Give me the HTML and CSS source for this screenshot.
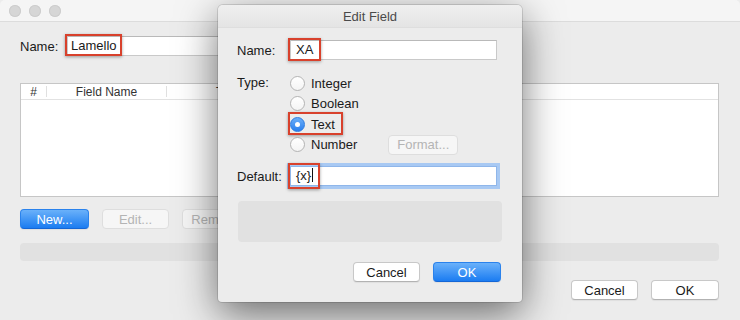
FILE: index.html
```html
<!DOCTYPE html>
<html lang="en">
<head>
    <meta charset="UTF-8">
    <meta name="viewport" content="width=device-width, initial-scale=1.0">
    <title>Edit Field</title>
    <link rel="stylesheet" href="styles.css">
</head>
<body>
    <div class="window">
        <div class="titlebar">
            <span class="dot"></span>
            <span class="dot"></span>
            <span class="dot"></span>
        </div>

        <div class="content">
            <div class="name-row">
                <span class="label">Name:</span>
                <div class="field-wrap">
                    <div class="field main-field">Lamello</div>
                    <span class="mark mark-lamello"></span>
                </div>
            </div>

            <!-- field table -->
            <div class="table">
                <div class="table-head">
                    <span class="col col-num">#</span>
                    <span class="col col-name">Field Name</span>
                    <span class="col col-type">Type</span>
                </div>
            </div>

            <div class="button-row">
                <button class="btn btn-blue">New...</button>
                <button class="btn btn-off">Edit...</button>
                <button class="btn btn-off">Remove</button>
            </div>

            <div class="status-bar"></div>

            <div class="footer">
                <button class="btn">Cancel</button>
                <button class="btn">OK</button>
            </div>
        </div>
    </div>

    <!-- sheet dialog over the window -->
    <div class="dialog">
        <div class="dialog-title">Edit Field</div>
        <div class="dialog-body">
            <div class="form-row">
                <span class="form-label">Name:</span>
                <div class="field-wrap">
                    <div class="field">XA</div>
                    <span class="mark mark-name"></span>
                </div>
            </div>

            <div class="form-row type-row">
                <span class="form-label">Type:</span>
                <div class="radios">
                    <div class="radio"><span class="circle"></span>Integer</div>
                    <div class="radio"><span class="circle"></span>Boolean</div>
                    <div class="radio"><span class="circle checked"></span>Text<span class="mark mark-text"></span></div>
                    <div class="radio radio-number">
                        <span class="circle"></span>Number
                        <button class="btn btn-off btn-format">Format...</button>
                    </div>
                </div>
            </div>

            <div class="form-row default-row">
                <span class="form-label">Default:</span>
                <div class="field-wrap">
                    <div class="field focused">{x}<span class="caret"></span></div>
                    <span class="mark mark-default"></span>
                </div>
            </div>

            <div class="info-box"></div>

            <div class="dialog-buttons">
                <button class="btn">Cancel</button>
                <button class="btn btn-blue">OK</button>
            </div>
        </div>
    </div>
</body>
</html>
```

FILE: styles.css
```css
body {
    font-family: 'Liberation Sans', Arial, sans-serif;
    font-size: 13px;
    color: #1a1a1a;
    margin: 0;
    padding: 0;
    width: 740px;
    height: 320px;
    overflow: hidden;
    background-color: #ececec;
    position: relative;
}

.window {
    height: 320px;
    background-color: #ececec;
}

.titlebar {
    height: 21px;
    background-color: #f5f5f5;
    border-bottom: 1px solid #dcdcdc;
    display: flex;
    align-items: center;
    gap: 8px;
    padding-left: 9px;
    border-radius: 5px 5px 0 0;
}

.dot {
    width: 12px;
    height: 12px;
    border-radius: 50%;
    background-color: #d6d6d6;
    box-shadow: inset 0 0 0 1px #cdcdcd;
}

.content {
    padding: 0 21px 0 20px;
}

.name-row {
    display: flex;
    align-items: center;
    margin-top: 14px;
}

.name-row .label {
    width: 47px;
}

.field-wrap {
    position: relative;
}

.field {
    box-sizing: border-box;
    height: 20px;
    width: 207px;
    line-height: 18px;
    padding-left: 5px;
    background-color: white;
    border: 1px solid #c9c9c9;
    border-top-color: #b9b9b9;
}

.main-field {
    width: 300px;
    padding-left: 3px;
}

.field.focused {
    box-shadow: 0 0 0 3px #a8c9f3;
    border-color: #8fb6ea;
}

.caret {
    display: inline-block;
    width: 1px;
    height: 14px;
    background-color: #111;
    vertical-align: -2px;
    margin-left: 1px;
}

/* red highlight boxes */
.mark {
    position: absolute;
    box-sizing: border-box;
    border: 2px solid #d8412c;
    box-shadow: 0 1px 3px rgba(0, 0, 0, 0.35);
    pointer-events: none;
}

.mark-lamello {
    left: -2px;
    top: -2px;
    width: 57px;
    height: 22px;
}

.mark-name {
    left: -2px;
    top: -2px;
    width: 33px;
    height: 23px;
}

.mark-text {
    left: -2px;
    top: -2px;
    width: 55px;
    height: 23px;
}

.mark-default {
    left: -2px;
    top: -3px;
    width: 32px;
    height: 26px;
}

.table {
    margin-top: 27px;
    height: 112px;
    background-color: white;
    border: 1px solid #c6c6c6;
}

.table-head {
    display: flex;
    height: 15px;
    border-bottom: 1px solid #e2e2e2;
    font-size: 12px;
    color: #333;
    line-height: 15px;
}

.col {
    text-align: center;
    border-right: 1px solid #e0e0e0;
    margin: 2px 0;
    line-height: 12px;
}

.col-num {
    width: 25px;
}

.col-name {
    width: 119px;
}

.col-type {
    width: 124px;
}

.button-row {
    display: flex;
    gap: 13px;
    margin-top: 12px;
}

.btn {
    box-sizing: border-box;
    height: 20px;
    width: 67px;
    padding: 0;
    font-family: 'Liberation Sans', Arial, sans-serif;
    font-size: 13px;
    color: #1a1a1a;
    background-color: white;
    border: 1px solid #c8c8c8;
    border-bottom-color: #b2b2b2;
    border-radius: 4px;
    box-shadow: 0 1px 1px rgba(0, 0, 0, 0.06);
}

.btn-blue {
    width: 69px;
    color: white;
    background: linear-gradient(#6ab1fa, #1b7cf1);
    border-color: #2a82ec;
    border-bottom-color: #1466d6;
}

.btn-off {
    color: #b4b4b4;
    background-color: #f6f6f6;
    border-color: #dedede;
    box-shadow: none;
}

.status-bar {
    margin-top: 14px;
    height: 18px;
    border-radius: 4px;
    background-color: #e1e1e1;
}

.footer {
    display: flex;
    justify-content: flex-end;
    gap: 13px;
    margin-top: 19px;
}

.footer .btn:last-child {
    width: 68px;
}

/* dialog */
.dialog {
    position: absolute;
    left: 218px;
    top: 5px;
    width: 304px;
    height: 297px;
    background-color: #ececec;
    border-radius: 5px 5px 4px 4px;
    box-shadow: 0 0 0 1px rgba(0, 0, 0, 0.12), 0 12px 40px rgba(0, 0, 0, 0.55);
}

.dialog-title {
    height: 23px;
    line-height: 23px;
    text-align: center;
    color: #4a4a4a;
    background: linear-gradient(#efefef, #e4e4e4);
    border-radius: 5px 5px 0 0;
    border-bottom: 1px solid #dedede;
    box-sizing: border-box;
}

.dialog-body {
    padding: 12px 20px 0 19px;
}

.form-row {
    display: flex;
    align-items: center;
}

.form-label {
    width: 53px;
}

.type-row {
    align-items: flex-start;
    margin-top: 13px;
}

.type-row .form-label {
    line-height: 20px;
}

.radios {
    display: flex;
    flex-direction: column;
}

.radio {
    position: relative;
    display: flex;
    align-items: center;
    height: 20.5px;
    gap: 6px;
}

.circle {
    box-sizing: border-box;
    width: 15px;
    height: 15px;
    border-radius: 50%;
    background: linear-gradient(#ffffff, #f4f4f4);
    border: 1px solid #b4b4b4;
}

.circle.checked {
    background: linear-gradient(#6aaef8, #2a7fee);
    border-color: #2c7be0;
    position: relative;
}

.circle.checked::after {
    content: "";
    position: absolute;
    left: 4px;
    top: 4px;
    width: 5px;
    height: 5px;
    border-radius: 50%;
    background-color: white;
}

.btn-format {
    width: 70px;
    margin-left: 25px;
}

.default-row {
    margin-top: 11px;
}

.info-box {
    margin-top: 15px;
    margin-left: 1px;
    height: 41px;
    border-radius: 4px;
    background-color: #e1e1e1;
}

.dialog-buttons {
    display: flex;
    justify-content: flex-end;
    gap: 13px;
    margin-top: 20px;
    padding-right: 1px;
}

.dialog-buttons .btn-blue {
    width: 68px;
}
```
